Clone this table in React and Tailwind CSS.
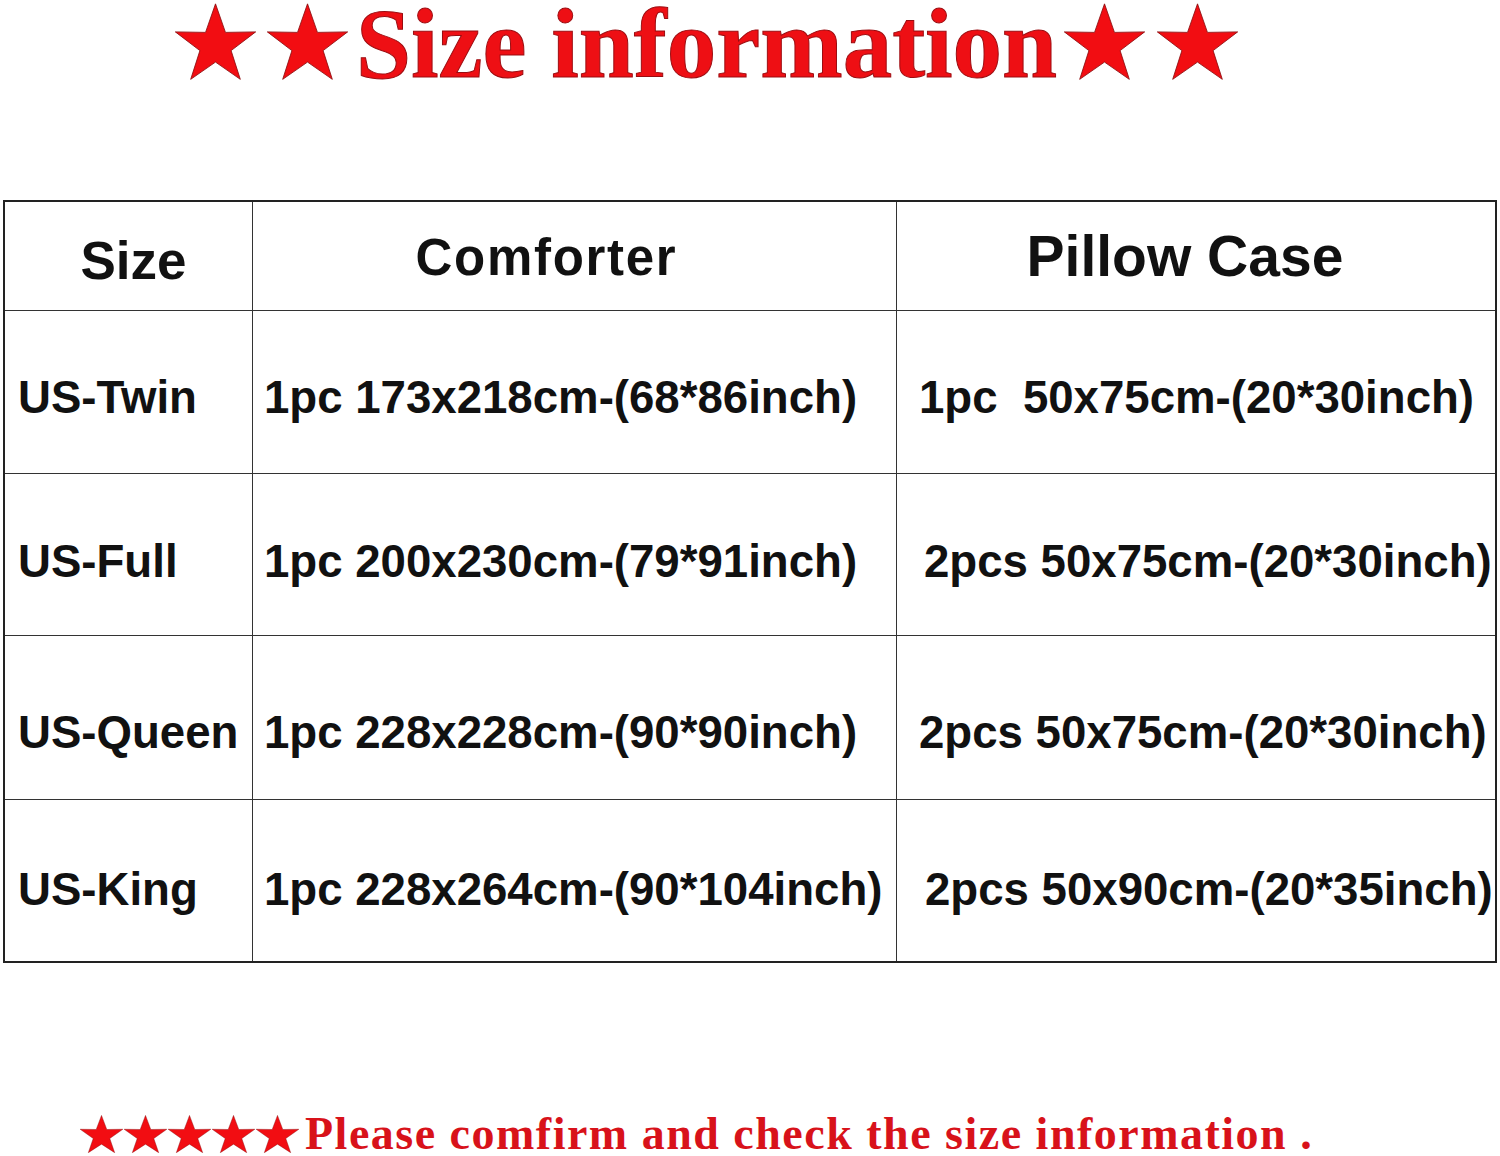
import React from "react";

function Star({ className }) {
  return (
    <svg viewBox="2 0 96 92" className={className} preserveAspectRatio="none">
      <polygon
        points="50,1 61.8,35.1 97.6,34.5 68.5,56.9 79.4,91.2 50,70.6 20.6,91.2 31.5,56.9 2.4,34.5 38.2,35.1"
        fill="#f20d12"
        stroke="#8a0d10"
        strokeWidth="1"
        strokeLinejoin="miter"
      />
    </svg>
  );
}

const rows = [
  { size: "US-Twin", comf: "1pc 173x218cm-(68*86inch)", pillow: "1pc  50x75cm-(20*30inch)", h: "h-[163px]", pt: "pt-[12px]", pl3: "pl-[22px]" },
  { size: "US-Full", comf: "1pc 200x230cm-(79*91inch)", pillow: "2pcs 50x75cm-(20*30inch)", h: "h-[162px]", pt: "pt-[14px]", pl3: "pl-[27px]" },
  { size: "US-Queen", comf: "1pc 228x228cm-(90*90inch)", pillow: "2pcs 50x75cm-(20*30inch)", h: "h-[164px]", pt: "pt-[30px]", pl3: "pl-[22px]" },
  { size: "US-King", comf: "1pc 228x264cm-(90*104inch)", pillow: "2pcs 50x90cm-(20*35inch)", h: "h-[161px]", pt: "pt-[18px]", pl3: "pl-[28px]" },
];

export default function App() {
  const cell = "flex items-center border-[#333]";
  const txt = "font-['Liberation_Sans',Arial,sans-serif] font-bold text-[45.6px] text-[#111] whitespace-pre leading-none";
  return (
    <div className="w-[1500px] h-[1156px] bg-white overflow-hidden relative">
      {/* Title */}
      <div className="h-[200px] flex items-start pl-[175px]">
        <div className="flex items-center gap-[11px] mt-[3px]">
          <Star className="w-[81px] h-[77px]" />
          <Star className="w-[81px] h-[77px]" />
        </div>
        <div className="font-['Liberation_Serif','Times_New_Roman',serif] font-bold text-[99px] leading-[88px] text-[#ee0f14] ml-[8px] [-webkit-text-stroke:1px_#9a0c10]">
          Size information
        </div>
        <div className="flex items-center gap-[12px] ml-[7px] mt-[3px]">
          <Star className="w-[81px] h-[77px]" />
          <Star className="w-[81px] h-[77px]" />
        </div>
      </div>

      {/* Table */}
      <div className="ml-[3px] w-[1494px] border-2 border-[#222]">
        <div className="grid grid-cols-[248px_644px_598px]">
          <div className={`${cell} h-[109px] border-r border-b justify-center pt-[8px] pl-[10px]`}>
            <span className="font-['Liberation_Sans',Arial,sans-serif] font-bold text-[53px] text-[#111] leading-none">Size</span>
          </div>
          <div className={`${cell} h-[109px] border-r border-b justify-center pt-[2px] pr-[56px]`}>
            <span className="font-['Liberation_Sans',Arial,sans-serif] font-bold text-[51px] tracking-[1.7px] text-[#111] leading-none">Comforter</span>
          </div>
          <div className={`${cell} h-[109px] border-b justify-center pt-[0px] pr-[22px]`}>
            <span className="font-['Liberation_Sans',Arial,sans-serif] font-bold text-[57px] text-[#111] leading-none">Pillow Case</span>
          </div>

          {rows.map((r, i) => {
            const last = i === rows.length - 1;
            const bb = last ? "" : "border-b";
            return (
              <React.Fragment key={r.size}>
                <div className={`${cell} ${r.h} ${r.pt} border-r ${bb} pl-[13px]`}>
                  <span className={txt}>{r.size}</span>
                </div>
                <div className={`${cell} ${r.h} ${r.pt} border-r ${bb} pl-[11px]`}>
                  <span className={txt}>{r.comf}</span>
                </div>
                <div className={`${cell} ${r.h} ${r.pt} ${bb} ${r.pl3}`}>
                  <span className={txt}>{r.pillow}</span>
                </div>
              </React.Fragment>
            );
          })}
        </div>
      </div>

      {/* Footer */}
      <div className="mt-[148px] pl-[80px] flex items-end">
        <div className="flex items-end gap-[1px] mb-[4px]">
          <Star className="w-[43px] h-[38px]" />
          <Star className="w-[43px] h-[38px]" />
          <Star className="w-[43px] h-[38px]" />
          <Star className="w-[43px] h-[38px]" />
          <Star className="w-[43px] h-[38px]" />
        </div>
        <div className="font-['Liberation_Serif','Times_New_Roman',serif] font-bold text-[46px] tracking-[1.5px] leading-[46px] text-[#d8121a] ml-[6px]">
          Please comfirm and check the size information .
        </div>
      </div>
    </div>
  );
}
